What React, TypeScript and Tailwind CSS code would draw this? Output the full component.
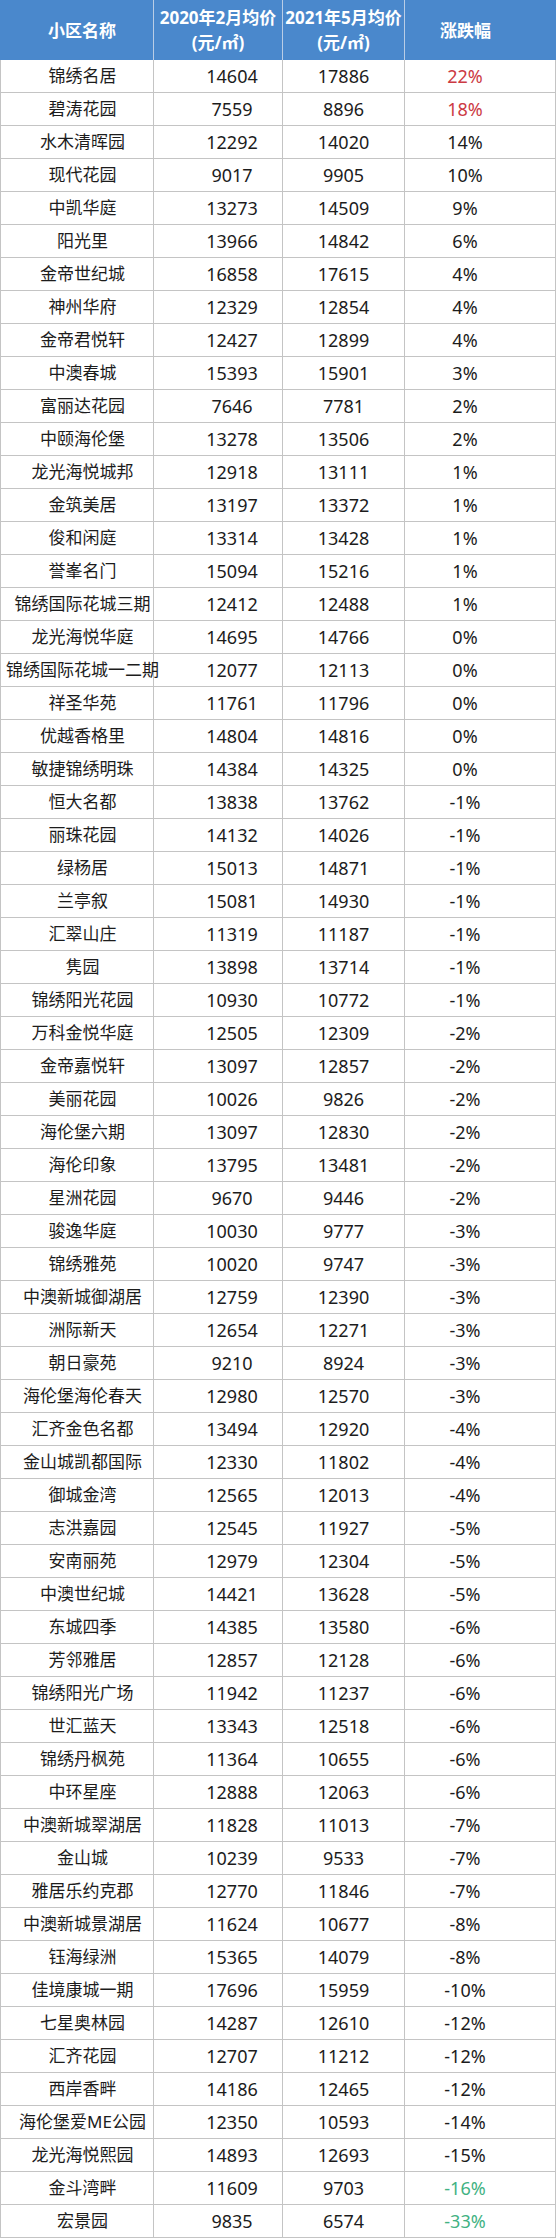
const rows: [string, number, number, string][] = [
  ['锦绣名居', 14604, 17886, '22%'],
  ['碧涛花园', 7559, 8896, '18%'],
  ['水木清晖园', 12292, 14020, '14%'],
  ['现代花园', 9017, 9905, '10%'],
  ['中凯华庭', 13273, 14509, '9%'],
  ['阳光里', 13966, 14842, '6%'],
  ['金帝世纪城', 16858, 17615, '4%'],
  ['神州华府', 12329, 12854, '4%'],
  ['金帝君悦轩', 12427, 12899, '4%'],
  ['中澳春城', 15393, 15901, '3%'],
  ['富丽达花园', 7646, 7781, '2%'],
  ['中颐海伦堡', 13278, 13506, '2%'],
  ['龙光海悦城邦', 12918, 13111, '1%'],
  ['金筑美居', 13197, 13372, '1%'],
  ['俊和闲庭', 13314, 13428, '1%'],
  ['誉峯名门', 15094, 15216, '1%'],
  ['锦绣国际花城三期', 12412, 12488, '1%'],
  ['龙光海悦华庭', 14695, 14766, '0%'],
  ['锦绣国际花城一二期', 12077, 12113, '0%'],
  ['祥圣华苑', 11761, 11796, '0%'],
  ['优越香格里', 14804, 14816, '0%'],
  ['敏捷锦绣明珠', 14384, 14325, '0%'],
  ['恒大名都', 13838, 13762, '-1%'],
  ['丽珠花园', 14132, 14026, '-1%'],
  ['绿杨居', 15013, 14871, '-1%'],
  ['兰亭叙', 15081, 14930, '-1%'],
  ['汇翠山庄', 11319, 11187, '-1%'],
  ['隽园', 13898, 13714, '-1%'],
  ['锦绣阳光花园', 10930, 10772, '-1%'],
  ['万科金悦华庭', 12505, 12309, '-2%'],
  ['金帝嘉悦轩', 13097, 12857, '-2%'],
  ['美丽花园', 10026, 9826, '-2%'],
  ['海伦堡六期', 13097, 12830, '-2%'],
  ['海伦印象', 13795, 13481, '-2%'],
  ['星洲花园', 9670, 9446, '-2%'],
  ['骏逸华庭', 10030, 9777, '-3%'],
  ['锦绣雅苑', 10020, 9747, '-3%'],
  ['中澳新城御湖居', 12759, 12390, '-3%'],
  ['洲际新天', 12654, 12271, '-3%'],
  ['朝日豪苑', 9210, 8924, '-3%'],
  ['海伦堡海伦春天', 12980, 12570, '-3%'],
  ['汇齐金色名都', 13494, 12920, '-4%'],
  ['金山城凯都国际', 12330, 11802, '-4%'],
  ['御城金湾', 12565, 12013, '-4%'],
  ['志洪嘉园', 12545, 11927, '-5%'],
  ['安南丽苑', 12979, 12304, '-5%'],
  ['中澳世纪城', 14421, 13628, '-5%'],
  ['东城四季', 14385, 13580, '-6%'],
  ['芳邻雅居', 12857, 12128, '-6%'],
  ['锦绣阳光广场', 11942, 11237, '-6%'],
  ['世汇蓝天', 13343, 12518, '-6%'],
  ['锦绣丹枫苑', 11364, 10655, '-6%'],
  ['中环星座', 12888, 12063, '-6%'],
  ['中澳新城翠湖居', 11828, 11013, '-7%'],
  ['金山城', 10239, 9533, '-7%'],
  ['雅居乐约克郡', 12770, 11846, '-7%'],
  ['中澳新城景湖居', 11624, 10677, '-8%'],
  ['钰海绿洲', 15365, 14079, '-8%'],
  ['佳境康城一期', 17696, 15959, '-10%'],
  ['七星奥林园', 14287, 12610, '-12%'],
  ['汇齐花园', 12707, 11212, '-12%'],
  ['西岸香畔', 14186, 12465, '-12%'],
  ['海伦堡爱ME公园', 12350, 10593, '-14%'],
  ['龙光海悦熙园', 14893, 12693, '-15%'],
  ['金斗湾畔', 11609, 9703, '-16%'],
  ['宏景园', 9835, 6574, '-33%'],
];

const font = { fontFamily: '"Noto Sans", "Noto Sans CJK SC", sans-serif' };

function pctColor(p: string) {
  if (p === '22%' || p === '18%') return 'text-[#cc3a43]';
  if (p === '-16%' || p === '-33%') return 'text-[#42b283]';
  return 'text-[#1c1c1c]';
}

export default function App() {
  return (
    <div className="w-[556px] bg-white" style={font}>
      {/* header */}
      <div className="grid h-[60px] grid-cols-[154px_129px_122px_151px] bg-[#4a88cc] text-[17px] font-bold leading-[25px] text-white">
        <div className="flex items-center justify-center border-r border-[#b9cde6] pl-[11px]">小区名称</div>
        <div className="flex flex-col items-center justify-center border-r border-[#b9cde6]">
          <span>2020年2月均价</span>
          <span>(元/㎡)</span>
        </div>
        <div className="flex flex-col items-center justify-center border-r border-[#b9cde6]">
          <span>2021年5月均价</span>
          <span>(元/㎡)</span>
        </div>
        <div className="flex items-center justify-center pr-[30px]">涨跌幅</div>
      </div>

      {/* rows */}
      <div className="border-l border-[#c4c4c4]">
        {rows.map(([name, a, b, pct]) => (
          <div
            key={name}
            className="grid h-[33px] grid-cols-[153px_129px_122px_151px] border-b border-[#c4c4c4] text-[#1c1c1c]"
          >
            <div className="flex items-center justify-center whitespace-nowrap border-r border-[#c4c4c4] pl-[11px] text-[17px]">
              {name}
            </div>
            <div className="flex items-center justify-center border-r border-[#c4c4c4] pl-[28px] text-[18px]">
              {a}
            </div>
            <div className="flex items-center justify-center border-r border-[#c4c4c4] text-[18px]">
              {b}
            </div>
            <div className={`flex items-center justify-center border-r border-[#c4c4c4] pr-[30px] text-[18px] ${pctColor(pct)}`}>
              {pct}
            </div>
          </div>
        ))}
      </div>
    </div>
  );
}
